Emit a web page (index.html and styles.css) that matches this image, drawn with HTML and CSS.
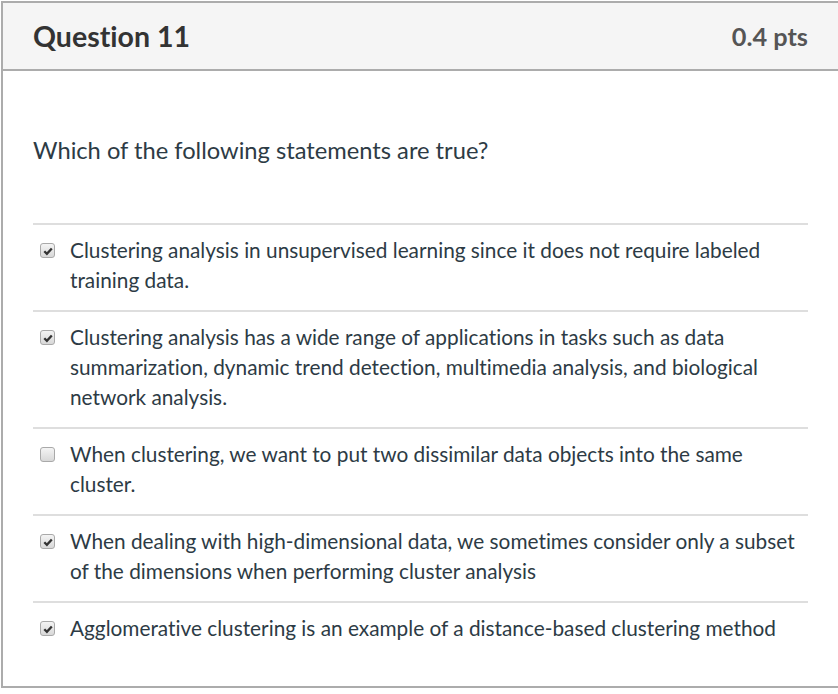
FILE: index.html
```html
<!DOCTYPE html>
<html>
<head>
<meta charset="utf-8">
<link rel="stylesheet" href="styles.css">
</head>
<body>
<div class="question">
  <div class="header">
    <span class="name">Question 11</span>
    <span class="points">0.4 pts</span>
  </div>
  <div class="content">
    <div class="text">Which of the following statements are true?</div>
    <div class="answers">
      <div class="answer">
        <span class="box checked"><svg viewBox="0 0 10 10" width="10" height="10"><path d="M1.3 5.2 L3.9 7.8 L8.8 2.4" fill="none" stroke="#333" stroke-width="2.3"/></svg></span>
        <span class="label">Clustering analysis in unsupervised learning since it does not require labeled training data.</span>
      </div>
      <div class="answer">
        <span class="box checked"><svg viewBox="0 0 10 10" width="10" height="10"><path d="M1.3 5.2 L3.9 7.8 L8.8 2.4" fill="none" stroke="#333" stroke-width="2.3"/></svg></span>
        <span class="label">Clustering analysis has a wide range of applications in tasks such as data summarization, dynamic trend detection, multimedia analysis, and biological network analysis.</span>
      </div>
      <div class="answer">
        <span class="box"></span>
        <span class="label">When clustering, we want to put two dissimilar data objects into the same cluster.</span>
      </div>
      <div class="answer">
        <span class="box checked"><svg viewBox="0 0 10 10" width="10" height="10"><path d="M1.3 5.2 L3.9 7.8 L8.8 2.4" fill="none" stroke="#333" stroke-width="2.3"/></svg></span>
        <span class="label">When dealing with high-dimensional data, we sometimes consider only a subset of the dimensions when performing cluster analysis</span>
      </div>
      <div class="answer">
        <span class="box checked"><svg viewBox="0 0 10 10" width="10" height="10"><path d="M1.3 5.2 L3.9 7.8 L8.8 2.4" fill="none" stroke="#333" stroke-width="2.3"/></svg></span>
        <span class="label">Agglomerative clustering is an example of a distance-based clustering method</span>
      </div>
    </div>
  </div>
</div>
</body>
</html>
```
FILE: styles.css
```css
html, body {
  margin: 0;
  padding: 0;
  background: #fff;
  overflow: hidden;
}
body {
  font-family: Lato, "Open Sans", sans-serif;
  color: #2d3b45;
  font-variant-ligatures: none;
}
.question {
  margin: 1px 0 0 1px;
  width: 835px;
  border: 2px solid #acacac;
  box-sizing: content-box;
}
.header {
  display: flex;
  justify-content: space-between;
  align-items: center;
  height: 66px;
  padding: 0 30px;
  background: #f5f5f5;
  border-bottom: 2px solid #acacac;
}
.name {
  font-size: 28.5px;
  font-weight: bold;
  color: #333;
}
.points {
  font-size: 25.3px;
  font-weight: bold;
  color: #555;
}
.content {
  padding: 64px 30px 28px 30px;
}
.text {
  font-size: 23.7px;
  line-height: 30px;
  color: #2d3b45;
  margin-bottom: 58px;
}
.answer {
  display: flex;
  align-items: flex-start;
  gap: 15px;
  border-top: 2px solid #dedede;
  padding: 10px 0 15px 7px;
  font-size: 20.8px;
  line-height: 30px;
}
.box {
  flex: none;
  width: 13px;
  height: 13px;
  margin-top: 8px;
  border: 1px solid #a9a9a9;
  border-radius: 3px;
  background: linear-gradient(#f4f4f4, #d8d8d8);
  display: flex;
  align-items: center;
  justify-content: center;
}
.label {
  flex: 1;
}
```
